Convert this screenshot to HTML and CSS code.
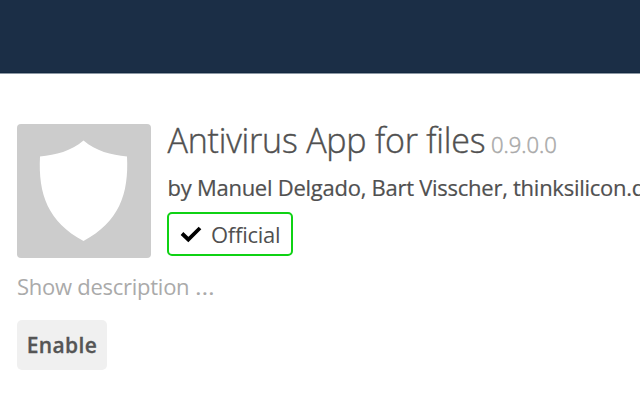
FILE: index.html
```html
<!DOCTYPE html>
<html lang="en">
<head>
<meta charset="utf-8">
<title>Apps</title>
<link rel="stylesheet" href="styles.css">
</head>
<body>
<header class="topbar"></header>
<main class="app">
  <div class="summary">
    <div class="app-icon">
      <svg width="134" height="134" viewBox="0 0 134 134"><path fill="#fff" d="M66.500 16.500C54 27 39 31 23 32.500C21 70 31 98 66.500 117C102 98 112 70 110 32.500C94 31 79 27 66.500 16.500Z"/></svg>
    </div>
    <div class="info">
      <h2 class="name">Antivirus App for files <span class="version">0.9.0.0</span></h2>
      <div class="author">by Manuel Delgado, Bart Visscher, thinksilicon.de</div>
      <div class="badge">
        <svg width="22" height="18" viewBox="0 0 22 18"><path fill="none" stroke="#000" stroke-width="3.800" d="M2 8.500L8.300 14.500L20 3"/></svg>
        <span>Official</span>
      </div>
    </div>
  </div>
  <a class="toggle">Show description <span class="dots">…</span></a>
  <button class="enable">Enable</button>
</main>
</body>
</html>
```
FILE: styles.css
```css
body {
  margin: 0;
  height: 400px;
  overflow: hidden;
  background: #fff;
  color: #505050;
  font-family: "Open Sans", sans-serif;
}
.topbar {
  box-sizing: border-box;
  height: 73px;
  background: #1b2e46;
  border-bottom: 1px solid #132840;
  box-shadow: 0 1px 0 #8d98a4;
}
.app {
  padding: 51px 0 0 17px;
}
.summary {
  display: flex;
  gap: 17px;
  height: 134px;
}
.app-icon {
  flex: none;
  width: 134px;
  height: 134px;
  border-radius: 4px;
  background: #ccc;
  overflow: hidden;
}
.app-icon svg {
  display: block;
}
.info {
  flex: none;
  margin-left: -0.500px;
  white-space: nowrap;
}
.name {
  margin: -7px 0 0;
  height: 56px;
  font-size: 34px;
  line-height: 46px;
  font-weight: 300;
  letter-spacing: -0.22px;
  -webkit-text-stroke: 0.4px #505050;
}
.version {
  margin-left: -3px;
  font-size: 22px;
  letter-spacing: 0;
  color: #aaa;
  -webkit-text-stroke: 0.5px #aaa;
}
.author {
  height: 39px;
  font-size: 22px;
  line-height: 28px;
  letter-spacing: -0.26px;
  -webkit-text-stroke: 0.2px #505050;
}
.badge {
  box-sizing: border-box;
  display: flex;
  align-items: center;
  gap: 9px;
  width: 126px;
  height: 44px;
  margin-left: -0.500px;
  padding-left: 11px;
  border: 2px solid #0fd214;
  border-radius: 5px;
  font-size: 22px;
  letter-spacing: -0.25px;
}
.toggle {
  display: block;
  height: 62px;
  font-size: 22px;
  line-height: 56px;
  letter-spacing: -0.26px;
  color: #aaa;
}
.dots {
  display: inline-block;
  transform: scaleX(1.150);
  transform-origin: left;
}
.enable {
  display: block;
  width: 90px;
  height: 50px;
  padding: 0;
  border: 0;
  border-radius: 5px;
  background: #f0f0f0;
  color: #555;
  font: 600 21px "Open Sans", sans-serif;
  letter-spacing: 0.4px;
  -webkit-text-stroke: 0.3px #555;
}
```
